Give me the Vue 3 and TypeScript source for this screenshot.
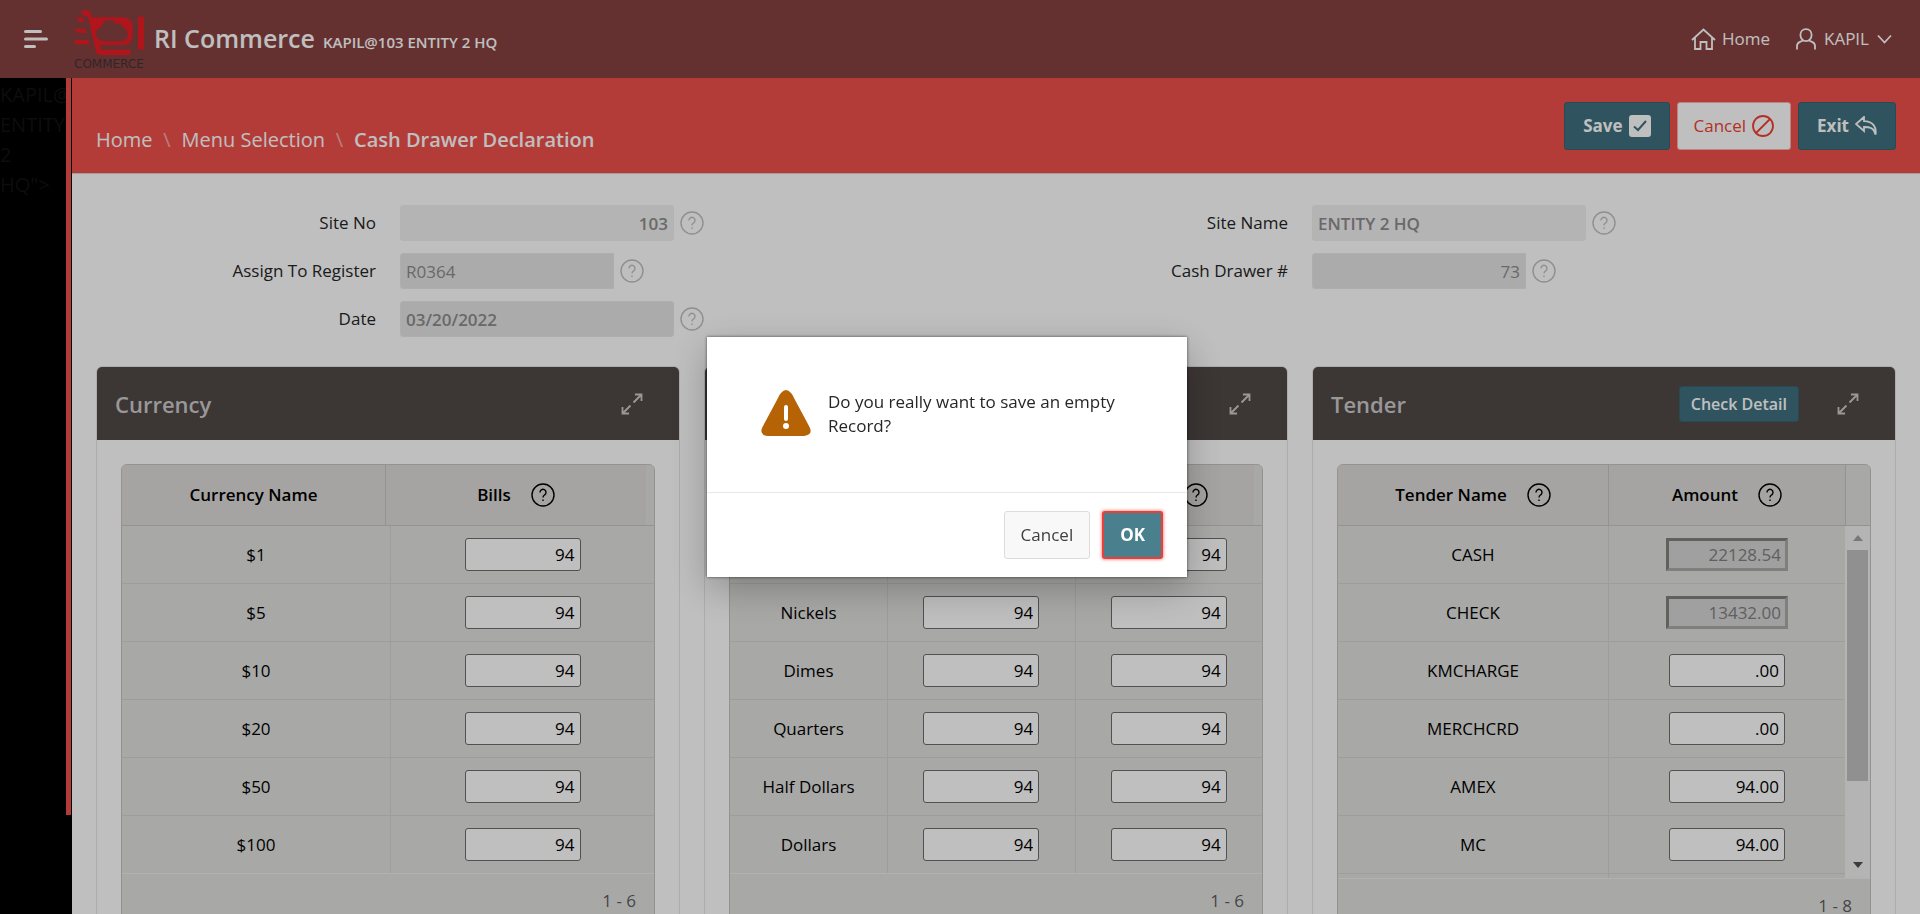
<script setup lang="ts">
import { reactive } from 'vue'

interface Column {
  label: string
  help?: boolean
}
interface Row {
  name: string
  values: string[]
  locked?: boolean
}
interface Panel {
  key: string
  title: string
  columns: Column[]
  rows: Row[]
  range: string
  action?: string
  scrolls?: boolean
}
interface Field {
  id: string
  label: string
  value: string
  kind: string
}

const columnFields: Field[][] = [
  [
    { id: 'site-no', label: 'Site No', value: '103', kind: 'display number' },
    { id: 'register', label: 'Assign To Register', value: 'R0364', kind: 'lov' },
    { id: 'date', label: 'Date', value: '03/20/2022', kind: 'strong' }
  ],
  [
    { id: 'site-name', label: 'Site Name', value: 'ENTITY 2 HQ', kind: 'display' },
    { id: 'drawer', label: 'Cash Drawer #', value: '73', kind: 'lov number' }
  ]
]

const panels = reactive<Panel[]>([
  {
    key: 'currency',
    title: 'Currency',
    columns: [{ label: 'Currency Name' }, { label: 'Bills', help: true }],
    rows: ['$1', '$5', '$10', '$20', '$50', '$100'].map((name) => ({ name, values: ['94'] })),
    range: '1 - 6'
  },
  {
    key: 'coins',
    title: 'Coins',
    columns: [{ label: 'Coin Name' }, { label: 'Rolls', help: true }, { label: 'Loose', help: true }],
    rows: ['Pennies', 'Nickels', 'Dimes', 'Quarters', 'Half Dollars', 'Dollars'].map((name) => ({
      name,
      values: ['94', '94']
    })),
    range: '1 - 6'
  },
  {
    key: 'tender',
    title: 'Tender',
    columns: [{ label: 'Tender Name', help: true }, { label: 'Amount', help: true }],
    rows: [
      { name: 'CASH', values: ['22128.54'], locked: true },
      { name: 'CHECK', values: ['13432.00'], locked: true },
      { name: 'KMCHARGE', values: ['.00'] },
      { name: 'MERCHCRD', values: ['.00'] },
      { name: 'AMEX', values: ['94.00'] },
      { name: 'MC', values: ['94.00'] },
      { name: 'VISA', values: ['94.00'] }
    ],
    range: '1 - 8',
    action: 'Check Detail',
    scrolls: true
  }
])
</script>

<template>
  <div class="shell">
    <svg class="sprite" aria-hidden="true">
      <symbol id="i-help" viewBox="0 0 24 24">
        <circle cx="12" cy="12" r="11" />
        <path d="M9 9.5a3 3 0 1 1 4.7 2.3c-1.1.8-1.7 1.3-1.7 2.6" />
        <path d="M12 16.6v1.4" />
      </symbol>
      <symbol id="i-expand" viewBox="0 0 22 22">
        <path d="M12.5 9.5 20 2M14 1.5h6.5V8M9.5 12.5 2 20M8 20.5H1.5V14" />
      </symbol>
    </svg>

    <header class="topbar">
      <button class="menu" type="button" aria-label="Main navigation">
        <svg width="24" height="18" viewBox="0 0 24 18">
          <path d="M1.5 1.5h15M1.5 9h21M1.5 16.5h9" />
        </svg>
      </button>
      <a class="brand" href="#">
        <span class="logo">
          <svg width="72" height="46" viewBox="0 0 216 138" aria-hidden="true">
            <path
              fill-rule="evenodd"
              d="M20 2h25q4 0 5 6l3 14h92q31 0 31 30v22q0 31-31 31H78l5 14h85v16H80q-11 0-14-10L42 20H32Q24 14 20 2ZM76 89Q66 82 66 71 66 55 82 52 84 32 104 30 120 29 127 42 143 36 148 54 161 58 161 73 161 90 146 94H90Q80 93 76 89Z"
            />
            <path d="M9 22h17l5 14H19q-7-2-10-14ZM3 56h30l5 13H14Q6 68 3 56ZM0 90h42l6 13H12Q2 102 0 90ZM192 20h18v98h-18Z" />
          </svg>
          <span class="wordmark">COMMERCE</span>
        </span>
        <span class="title">RI Commerce</span>
        <span class="tenant">KAPIL@103 ENTITY 2 HQ</span>
      </a>
      <nav class="user-nav" aria-label="User">
        <a href="#">
          <svg width="25" height="22" viewBox="0 0 25 22">
            <path d="M1 12 12.5 1.500 24 12M4 10v11h5.500v-7h6v7H21V10" />
          </svg>
          Home
        </a>
        <a href="#">
          <svg width="20" height="22" viewBox="0 0 20 22">
            <path d="M10 1.200c3.500 0 5.600 2.600 5.600 5.900S13 13.200 10 13.200 4.400 10.400 4.400 7.100 6.500 1.200 10 1.200ZM7 12.500l-3.500 1.600Q1 15.300 1 18v3.500M13 12.500l3.500 1.600Q19 15.300 19 18v3.500" />
          </svg>
          <span class="user-name">KAPIL</span>
          <svg width="15" height="10" viewBox="0 0 15 10"><path d="m1 1.500 6.500 7 6.500-7" /></svg>
        </a>
      </nav>
    </header>

    <div class="frame">
      <aside class="side"><p>KAPIL@103 ENTITY 2 HQ"&gt;</p></aside>
      <main class="main">
        <div class="crumb-bar">
          <nav class="crumbs" aria-label="Breadcrumb">
            <a href="#">Home</a><span class="sep">\</span><a href="#">Menu Selection</a
            ><span class="sep">\</span><h1>Cash Drawer Declaration</h1>
          </nav>
          <div class="actions">
            <button class="btn hot" type="button">
              Save
              <svg width="22" height="22" viewBox="0 0 22 22">
                <rect class="box" width="22" height="22" rx="3" />
                <path class="tick" d="m5 11.500 4 3.500 8-9" />
              </svg>
            </button>
            <button class="btn danger" type="button">
              Cancel
              <svg width="22" height="22" viewBox="0 0 22 22">
                <circle cx="11" cy="11" r="10" /><path d="M18 4 4 18" />
              </svg>
            </button>
            <button class="btn hot" type="button">
              Exit
              <svg width="22" height="20" viewBox="0 0 22 20">
                <path d="M9 1 1 8l8 7v-4c6 0 10 1 11.500 7.500C21.800 11 18 5.500 9 5.200Z" />
              </svg>
            </button>
          </div>
        </div>

        <form class="fields" @submit.prevent>
          <div v-for="(column, i) in columnFields" :key="i" class="field-column">
            <div v-for="field in column" :key="field.id" class="field" :class="field.kind">
              <label :for="field.id">{{ field.label }}</label>
              <input :id="field.id" :value="field.value" type="text" disabled />
              <button type="button" class="help" :aria-label="'Help: ' + field.label">
                <svg width="24" height="24"><use href="#i-help" /></svg>
              </button>
            </div>
          </div>
        </form>

        <div class="panels">
          <section v-for="panel in panels" :key="panel.key" class="panel" :class="panel.key">
            <div class="panel-head">
              <h2>{{ panel.title }}</h2>
              <button v-if="panel.action" class="detail" type="button">{{ panel.action }}</button>
              <button class="expand" type="button" :aria-label="'Maximize ' + panel.title">
                <svg width="22" height="22"><use href="#i-expand" /></svg>
              </button>
            </div>
            <div class="grid">
              <table class="grid-head">
                <thead>
                  <tr>
                    <th v-for="column in panel.columns" :key="column.label" scope="col">
                      <span class="col-title">
                        {{ column.label }}
                        <button v-if="column.help" type="button" class="help" :aria-label="'Help: ' + column.label">
                          <svg width="24" height="24"><use href="#i-help" /></svg>
                        </button>
                      </span>
                    </th>
                    <td class="filler"></td>
                  </tr>
                </thead>
              </table>
              <div class="grid-view">
                <table class="grid-body" :aria-label="panel.title">
                  <tbody>
                    <tr v-for="row in panel.rows" :key="row.name">
                      <td>{{ row.name }}</td>
                      <td v-for="(value, v) in row.values" :key="v">
                        <input
                          v-model="row.values[v]"
                          type="text"
                          :disabled="row.locked"
                          :aria-label="row.name + ' ' + panel.columns[v + 1].label"
                        />
                      </td>
                    </tr>
                  </tbody>
                </table>
                <div v-if="panel.scrolls" class="scrollbar" aria-hidden="true">
                  <span class="arrow up"></span>
                  <span class="thumb"></span>
                  <span class="arrow down"></span>
                </div>
              </div>
              <div class="grid-foot">{{ panel.range }}</div>
            </div>
          </section>
        </div>
      </main>
    </div>

    <div class="backdrop">
      <div class="dialog" role="alertdialog" aria-modal="true" aria-describedby="confirm-text">
        <div class="dialog-body">
          <svg width="50" height="46" viewBox="0 0 50 46" aria-hidden="true">
            <path class="tri" d="M20 3q5-6 10 0 2 2 3 5l15 28q5 9-5 10H7Q-3 45 2 36L17 8q1-3 3-5Z" />
            <path class="mark" d="M25 17v12" />
            <circle class="dot" cx="25" cy="36" r="3" />
          </svg>
          <p id="confirm-text">Do you really want to save an empty Record?</p>
        </div>
        <div class="dialog-foot">
          <button class="plain" type="button">Cancel</button>
          <button class="ok" type="button">OK</button>
        </div>
      </div>
    </div>
  </div>
</template>

<style>
html {
  background: #fff;
}
body {
  margin: 0;
}
</style>

<style scoped>
* {
  box-sizing: border-box;
}
.shell {
  height: 100vh;
  overflow: hidden;
  display: flex;
  flex-direction: column;
  font-family: 'Open Sans', 'Noto Sans', sans-serif;
  font-size: 17px;
  line-height: 24px;
  color: #262626;
}
.sprite {
  position: absolute;
  width: 0;
  height: 0;
}
svg {
  flex: none;
  display: block;
  fill: none;
  stroke: currentColor;
  stroke-width: 1.8;
}
button,
input {
  font: inherit;
  margin: 0;
}
button {
  cursor: pointer;
}
a {
  color: inherit;
  text-decoration: none;
}

/* Top bar */
.topbar {
  flex: none;
  height: 78px;
  display: flex;
  align-items: center;
  padding: 0 28px 0 24px;
  background: #874141;
  color: #fff;
}
.menu {
  padding: 0;
  border: 0;
  background: none;
  color: #fff;
}
.menu svg {
  stroke-width: 3;
  stroke-linecap: round;
}
.brand {
  flex: 1;
  display: flex;
  align-items: center;
  margin-left: 26px;
}
.logo {
  display: flex;
  flex-direction: column;
  gap: 3px;
  width: 72px;
  margin-right: 8px;
}
.logo svg {
  fill: #ea1c24;
  stroke: none;
}
.wordmark {
  font: 12px/10px 'DejaVu Sans', sans-serif;
  color: #3c3438;
}
.title {
  margin-bottom: 3px;
  font-size: 25px;
  font-weight: 600;
}
.tenant {
  margin: 5px 0 0 8px;
  font-size: 15px;
  font-weight: 600;
}
.user-nav {
  display: flex;
  gap: 26px;
}
.user-nav a {
  display: flex;
  align-items: center;
  gap: 6px;
}
.user-nav .user-name {
  margin: 0 2px;
}

/* Frame */
.frame {
  flex: 1;
  min-height: 0;
  display: flex;
}
.side {
  flex: none;
  width: 72px;
  background: #000;
}
.side p {
  width: 71px;
  height: 737px;
  margin: 0;
  padding: 2px 8px 0 0;
  overflow: hidden;
  border-right: 5px solid #ef514c;
  font-size: 20px;
  line-height: 30px;
  color: #121212;
}
.main {
  flex: 1;
  min-width: 0;
  background: #fff;
}
.crumb-bar {
  height: 96px;
  display: flex;
  justify-content: space-between;
  align-items: center;
  padding: 0 24px;
  background: #ef514c;
  border-bottom: 1px solid #d8d0d0;
  color: #fff;
}
.crumbs {
  display: flex;
  align-items: center;
  padding-top: 28px;
  font-size: 20px;
}
.crumbs h1 {
  margin: 0;
  font-size: 20px;
  font-weight: 600;
}
.sep {
  width: 29px;
  text-align: center;
  opacity: 0.5;
}
.actions {
  display: flex;
  gap: 7px;
}
.btn {
  height: 48px;
  display: flex;
  align-items: center;
  gap: 6px;
  padding: 0 18px;
  border: 1px solid #38636f;
  border-radius: 3px;
  white-space: nowrap;
}
.hot {
  background: #3f717f;
  color: #fff;
  font-weight: 700;
}
.danger {
  padding: 0 16px;
  background: #fff;
  color: #ef4135;
  border-color: #f8b0ac;
}
.box {
  fill: #fff;
  stroke: none;
}
.tick {
  stroke: #3f717f;
  stroke-width: 2;
}

/* Fields */
.fields {
  display: grid;
  grid-template-columns: 1fr 1fr;
  padding: 31px 12px 0;
}
.field-column {
  display: grid;
  align-content: start;
  gap: 12px;
}
.field {
  display: flex;
  align-items: center;
  height: 36px;
}
.field label {
  width: 316px;
  padding-right: 24px;
  text-align: right;
}
.field input {
  width: 274px;
  height: 36px;
  padding: 0 5px;
  border: 1px solid #e9e9e9;
  border-radius: 3px;
  background: #e5e5e5;
  color: #8c8c8c;
}
.field.display input,
.field.strong input {
  font-weight: 600;
}
.field.display input {
  background: #f0f0f0;
  border-color: #f0f0f0;
}
.field.lov input {
  width: 214px;
  border-radius: 3px 0 0 3px;
}
.field.number input {
  text-align: right;
}
.help {
  padding: 0;
  border: 0;
  background: none;
  color: inherit;
}
.help svg {
  stroke-width: 1.4;
}
.field .help {
  margin: 0 0 0 6px;
  color: #c0c0c0;
}

/* Panels */
.panels {
  display: grid;
  grid-template-columns: repeat(3, 1fr);
  gap: 24px;
  padding: 29px 24px 24px;
}
.panel {
  min-width: 0;
  border: 1px solid #e6e6e6;
  border-radius: 6px;
}
.panel-head {
  height: 73px;
  display: flex;
  align-items: center;
  padding: 0 36px 0 18px;
  background: #504947;
  border-radius: 5px 5px 0 0;
  color: #cdcbcb;
}
.panel-head h2 {
  flex: 1;
  margin: 0;
  font-size: 22px;
  font-weight: 600;
}
.detail {
  height: 36px;
  padding: 0 11px;
  margin-right: 38px;
  border: 1px solid #38636f;
  border-radius: 3px;
  background: #3f717f;
  color: #fff;
  font-size: 16px;
  line-height: 24px;
  font-weight: 600;
}
.expand {
  padding: 0;
  border: 0;
  background: none;
  color: #cdcbcb;
}
.grid {
  margin: 24px;
  border: 1px solid #c4c4c2;
  border-radius: 6px;
  overflow: hidden;
  background: #e1e1df;
  color: #000;
}
table {
  width: 100%;
  table-layout: fixed;
  border-spacing: 0;
}
th,
td {
  padding: 0;
  text-align: center;
  border-bottom: 1px solid #d2d2d0;
}
.grid-head th,
.grid-head td {
  height: 61px;
  background: #dcdbd8;
  border-bottom-color: #c4c4c2;
}
th {
  font-weight: 600;
}
th + th {
  border-left: 1px solid #c4c4c2;
}
.grid-head .filler {
  width: 8px;
  background: #e1e1df;
}
.col-title {
  display: flex;
  justify-content: center;
  align-items: center;
  gap: 20px;
  color: #000;
}
.grid-body {
  flex: 1;
  min-width: 0;
  height: max-content;
}
.grid-body td {
  height: 58px;
}
.grid-body td + td {
  border-left: 1px solid #d2d2d0;
}
.currency th:first-child {
  width: 263px;
}
.currency td:first-child {
  width: 268px;
}
.coins th:first-child {
  width: 155px;
}
.coins td:first-child {
  width: 157px;
}
.tender th:first-child,
.tender td:first-child {
  width: 270px;
}
.tender .filler {
  width: 25px;
  border-left: 1px solid #c4c4c2;
}
.grid-view {
  display: flex;
}
.tender .grid-view {
  height: 352px;
  overflow: hidden;
}
td input {
  width: 116px;
  height: 33px;
  padding: 0 5px;
  border: 1px solid #6c6c6c;
  border-radius: 3px;
  background: #fff;
  color: #000;
  text-align: right;
  vertical-align: middle;
}
td input:disabled {
  width: 122px;
  border: 3px solid;
  border-color: #80807d #aaaaa8 #aaaaa8 #80807d;
  border-radius: 0;
  background: #d6d6d6;
  color: #808080;
  padding: 0 4px;
}
.scrollbar {
  flex: none;
  width: 25px;
  display: flex;
  flex-direction: column;
  align-items: center;
  background: #f0f0f0;
}
.arrow {
  border: 5px solid transparent;
}
.arrow.up {
  margin: 4px 0 9px;
  border-bottom: 6px solid #a0a0a0;
}
.arrow.down {
  margin-top: auto;
  margin-bottom: 5px;
  border-top: 6px solid #505050;
}
.thumb {
  width: 21px;
  height: 231px;
  background: #c1c1c1;
}
.grid-foot {
  padding: 15px 18px;
  text-align: right;
  color: #5c5c5c;
  border-top: 1px solid #ececea;
}
.currency .grid-body tr:last-child td,
.coins .grid-body tr:last-child td {
  height: 57px;
  border-bottom: 0;
}

/* Confirmation */
.backdrop {
  position: fixed;
  inset: 0;
  display: flex;
  align-items: center;
  justify-content: center;
  padding-right: 26px;
  background: rgba(0, 0, 0, 0.25);
}
.dialog {
  width: 480px;
  background: #fff;
  box-shadow: 0 0 3px rgba(0, 0, 0, 0.6), 0 12px 36px rgba(0, 0, 0, 0.25);
}
.dialog-body {
  display: flex;
  align-items: flex-start;
  gap: 17px;
  padding: 53px 54px 54px;
  border-bottom: 1px solid #e8e8e8;
}
.dialog-body p {
  flex: 1;
  margin: 0;
}
.tri {
  fill: #b56304;
  stroke: none;
}
.mark {
  stroke: #fff;
  stroke-width: 4;
  stroke-linecap: round;
}
.dot {
  fill: #fff;
  stroke: none;
}
.dialog-foot {
  display: flex;
  justify-content: flex-end;
  gap: 12px;
  padding: 18px 24px;
}
.plain,
.ok {
  height: 48px;
  padding: 0 16px;
  border: 1px solid #dcdcdc;
  border-radius: 3px;
  background: #f8f8f8;
  color: #404040;
}
.ok {
  border: 2px solid #e8403a;
  box-shadow: 0 0 3px 1px rgba(232, 64, 58, 0.5);
  background: #4a808d;
  color: #fff;
  font-weight: 700;
}
</style>
